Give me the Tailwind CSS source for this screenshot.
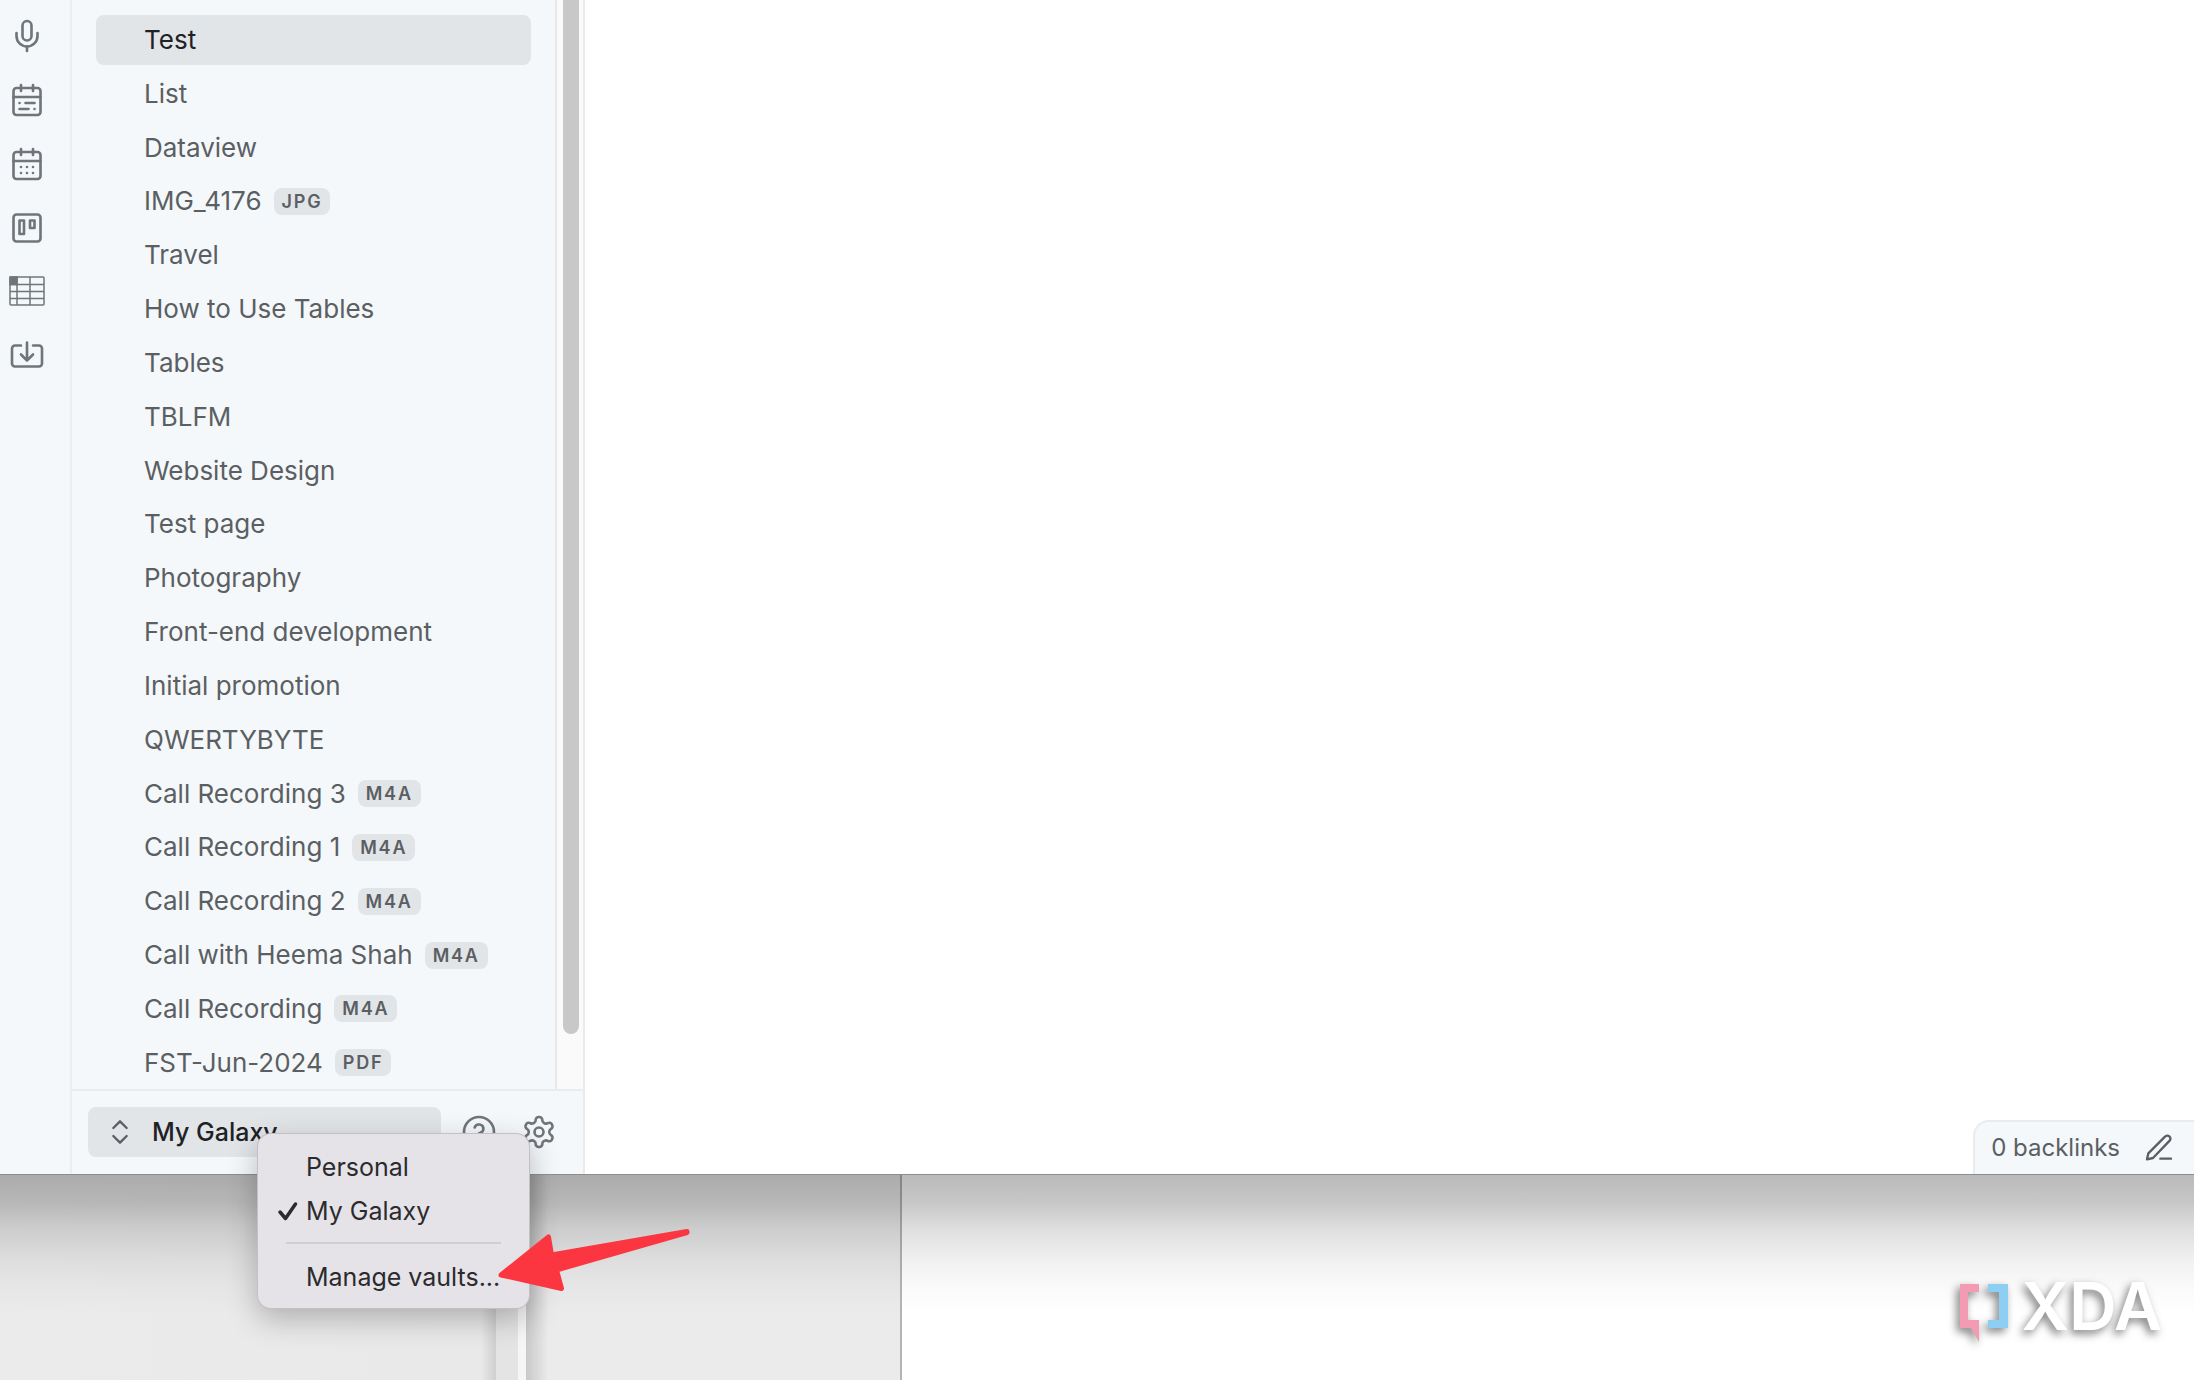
<!DOCTYPE html>
<html lang="en">
<head>
<meta charset="utf-8">
<title>My Galaxy</title>
<script src="https://cdn.jsdelivr.net/npm/@tailwindcss/browser@4"></script>
</head>
<body class="relative flex min-h-screen flex-col overflow-hidden bg-white font-['Inter',sans-serif] text-[25px] leading-8 text-[#5b5f63]">

<!-- Notes window -->
<main class="relative z-10 flex flex-1 border-b border-[#8e8e8e] bg-white">
  <nav aria-label="Ribbon" class="flex w-[72px] flex-col gap-7 border-r-2 border-[#ebeef0] bg-[#f4f8fa] pt-[18px] pl-[9px] text-[#70757a]">
    <button aria-label="Record audio" class="size-9"><svg class="size-9" viewBox="0 0 24 24" fill="none" stroke="currentColor" stroke-width="1.75" stroke-linecap="round" stroke-linejoin="round"><path d="M12 2a3 3 0 0 0-3 3v7a3 3 0 0 0 6 0V5a3 3 0 0 0-3-3Z"/><path d="M19 10v2a7 7 0 0 1-14 0v-2"/><path d="M12 19v3"/></svg></button>
    <button aria-label="Daily note" class="size-9"><svg class="size-9" viewBox="0 0 24 24" fill="none" stroke="currentColor" stroke-width="1.75" stroke-linecap="round" stroke-linejoin="round"><rect x="3" y="4" width="18" height="18" rx="2"/><path d="M16 2v4M8 2v4M3 10h18M17 14h-6M13 18H7M7 14h.01M17 18h.01"/></svg></button>
    <button aria-label="Calendar" class="size-9"><svg class="size-9" viewBox="0 0 24 24" fill="none" stroke="currentColor" stroke-width="1.75" stroke-linecap="round" stroke-linejoin="round"><rect x="3" y="4" width="18" height="18" rx="2"/><path d="M16 2v4M8 2v4M3 10h18M8 14h.01M12 14h.01M16 14h.01M8 18h.01M12 18h.01M16 18h.01"/></svg></button>
    <button aria-label="Kanban board" class="size-9"><svg class="size-9" viewBox="0 0 24 24" fill="none" stroke="currentColor" stroke-width="1.75" stroke-linecap="round" stroke-linejoin="round"><rect x="3" y="3" width="18" height="18" rx="2"/><path d="M7 7h3v9H7zM14 7h3v5h-3z"/></svg></button>
    <button aria-label="Table" class="size-9"><svg class="size-9" viewBox="0 0 36 36" fill="none" stroke="currentColor" stroke-width="1.5"><rect x="1" y="3" width="34" height="28" rx="1"/><path d="M8 3v28M21 3v28M1 10.500h34M1 17.500h34M1 24.500h34"/><path d="M1 3h7v7.500H1z" fill="currentColor"/></svg></button>
    <button aria-label="Import" class="size-9"><svg class="size-9" viewBox="0 0 24 24" fill="none" stroke="currentColor" stroke-width="1.75" stroke-linecap="round" stroke-linejoin="round"><path d="M12 3v12M8 11l4 4 4-4"/><path d="M8 5H4a2 2 0 0 0-2 2v10a2 2 0 0 0 2 2h16a2 2 0 0 0 2-2V7a2 2 0 0 0-2-2h-4"/></svg></button>
  </nav>

  <aside class="flex w-[513px] flex-col border-r-2 border-[#e9ebed] bg-[#f4f8fa]">
    <div class="flex flex-1">
      <ul class="flex flex-1 flex-col justify-between pt-[15px] pr-6 pb-px pl-6 text-[26px]">
        <li><a href="#" class="flex h-[50px] items-center gap-3 rounded-lg bg-[#e2e5e8] pl-12 text-[#1f2225]">Test</a></li>
        <li><a href="#" class="flex h-[50px] items-center gap-3 pl-12">List</a></li>
        <li><a href="#" class="flex h-[50px] items-center gap-3 pl-12">Dataview</a></li>
        <li><a href="#" class="flex h-[50px] items-center gap-3 pl-12">IMG_4176 <span class="rounded-lg bg-[#e2e5e8] px-2 text-[18px] leading-[27px] font-semibold tracking-widest">JPG</span></a></li>
        <li><a href="#" class="flex h-[50px] items-center gap-3 pl-12">Travel</a></li>
        <li><a href="#" class="flex h-[50px] items-center gap-3 pl-12">How to Use Tables</a></li>
        <li><a href="#" class="flex h-[50px] items-center gap-3 pl-12">Tables</a></li>
        <li><a href="#" class="flex h-[50px] items-center gap-3 pl-12">TBLFM</a></li>
        <li><a href="#" class="flex h-[50px] items-center gap-3 pl-12">Website Design</a></li>
        <li><a href="#" class="flex h-[50px] items-center gap-3 pl-12">Test page</a></li>
        <li><a href="#" class="flex h-[50px] items-center gap-3 pl-12">Photography</a></li>
        <li><a href="#" class="flex h-[50px] items-center gap-3 pl-12">Front-end development</a></li>
        <li><a href="#" class="flex h-[50px] items-center gap-3 pl-12">Initial promotion</a></li>
        <li><a href="#" class="flex h-[50px] items-center gap-3 pl-12">QWERTYBYTE</a></li>
        <li><a href="#" class="flex h-[50px] items-center gap-3 pl-12">Call Recording 3 <span class="rounded-lg bg-[#e2e5e8] px-2 text-[18px] leading-[27px] font-semibold tracking-widest">M4A</span></a></li>
        <li><a href="#" class="flex h-[50px] items-center gap-3 pl-12">Call Recording 1 <span class="rounded-lg bg-[#e2e5e8] px-2 text-[18px] leading-[27px] font-semibold tracking-widest">M4A</span></a></li>
        <li><a href="#" class="flex h-[50px] items-center gap-3 pl-12">Call Recording 2 <span class="rounded-lg bg-[#e2e5e8] px-2 text-[18px] leading-[27px] font-semibold tracking-widest">M4A</span></a></li>
        <li><a href="#" class="flex h-[50px] items-center gap-3 pl-12">Call with Heema Shah <span class="rounded-lg bg-[#e2e5e8] px-2 text-[18px] leading-[27px] font-semibold tracking-widest">M4A</span></a></li>
        <li><a href="#" class="flex h-[50px] items-center gap-3 pl-12">Call Recording <span class="rounded-lg bg-[#e2e5e8] px-2 text-[18px] leading-[27px] font-semibold tracking-widest">M4A</span></a></li>
        <li><a href="#" class="flex h-[50px] items-center gap-3 pl-12">FST-Jun-2024 <span class="rounded-lg bg-[#e2e5e8] px-2 text-[18px] leading-[27px] font-semibold tracking-widest">PDF</span></a></li>
      </ul>
      <!-- Scrollbar -->
      <div class="w-7 border-l-2 border-[#e6e8ea] bg-[#fafafa] pb-[55px] pl-[6px]">
        <div class="h-full w-4 rounded-b-full bg-[#c8c8c8]"></div>
      </div>
    </div>

    <div class="relative flex h-[85px] items-start border-t-2 border-[#e9ebed] pt-4 pr-[26px] pl-4 text-[#70757a]">
      <button class="flex h-[50px] flex-1 items-center gap-4 rounded-lg bg-[#e2e5e8] pl-4 font-medium text-[#1f2225]">
        <svg class="size-8 text-[#5b5f63]" viewBox="0 0 24 24" fill="none" stroke="currentColor" stroke-width="1.75" stroke-linecap="round" stroke-linejoin="round"><path d="m7 15 5 5 5-5M7 9l5-5 5 5"/></svg>
        My Galaxy
      </button>
      <button aria-label="Help" class="mt-[7px] ml-5 size-9"><svg class="size-9" viewBox="0 0 24 24" fill="none" stroke="currentColor" stroke-width="1.75" stroke-linecap="round" stroke-linejoin="round"><circle cx="12" cy="12" r="10"/><path d="M9.090 9a3 3 0 0 1 5.830 1c0 2-3 3-3 3M12 17h.01"/></svg></button>
      <button aria-label="Settings" class="mt-[7px] ml-6 size-9"><svg class="size-9" viewBox="0 0 24 24" fill="none" stroke="currentColor" stroke-width="1.75" stroke-linecap="round" stroke-linejoin="round"><path d="M12.220 2h-.44a2 2 0 0 0-2 2v.18a2 2 0 0 1-1 1.730l-.43.25a2 2 0 0 1-2 0l-.15-.08a2 2 0 0 0-2.730.73l-.22.38a2 2 0 0 0 .73 2.730l.15.1a2 2 0 0 1 1 1.720v.51a2 2 0 0 1-1 1.740l-.15.09a2 2 0 0 0-.73 2.730l.22.38a2 2 0 0 0 2.730.73l.15-.08a2 2 0 0 1 2 0l.43.25a2 2 0 0 1 1 1.730V20a2 2 0 0 0 2 2h.44a2 2 0 0 0 2-2v-.18a2 2 0 0 1 1-1.730l.43-.25a2 2 0 0 1 2 0l.15.08a2 2 0 0 0 2.730-.73l.22-.39a2 2 0 0 0-.73-2.730l-.15-.08a2 2 0 0 1-1-1.740v-.5a2 2 0 0 1 1-1.740l.15-.09a2 2 0 0 0 .73-2.730l-.22-.38a2 2 0 0 0-2.730-.73l-.15.08a2 2 0 0 1-2 0l-.43-.25a2 2 0 0 1-1-1.730V4a2 2 0 0 0-2-2z"/><circle cx="12" cy="12" r="3"/></svg></button>

      <!-- Vault menu -->
      <div role="menu" class="absolute top-[42px] left-[185px] flex w-[273px] flex-col rounded-[14px] border border-black/15 bg-[#e5e3e8] pt-[11px] pb-[9px] text-[#2b2b2e] shadow-[0_10px_30px_rgba(0,0,0,0.25)]">
        <button role="menuitem" class="flex h-11 items-center pl-12">Personal</button>
        <button role="menuitem" class="flex h-11 items-center gap-[7px] pl-[19px]">
          <svg class="h-[22px] w-[22px]" viewBox="0 0 22 22" fill="none" stroke="currentColor" stroke-width="3.500" stroke-linecap="round" stroke-linejoin="round"><path d="M3 12l5.500 6.500L18.500 4"/></svg>
          My Galaxy
        </button>
        <hr class="mx-7 mt-[9px] mb-[11px] border-t-2 border-[#d0ced3]">
        <button role="menuitem" class="flex h-11 items-center pl-12">Manage vaults...</button>
      </div>

      <!-- Arrow pointing at the last menu item -->
      <svg class="pointer-events-none absolute top-[135px] left-[418px] h-[74px] w-[206px]" viewBox="490 1226 206 74" fill="#fb3640" stroke="#fb3640" stroke-width="5" stroke-linejoin="round"><path d="M501 1275L548.500 1237L551.500 1255L687 1231.500L687 1232.500L556.500 1270L561.500 1288.500Z"/></svg>
    </div>
  </aside>

  <section aria-label="Editor" class="flex flex-1 items-end justify-end">
    <div class="flex h-[54px] items-center gap-[23px] rounded-tl-2xl border-t-2 border-l-2 border-[#e9ebed] bg-[#f4f8fa] pr-[19px] pl-4">
      <span class="text-2xl">0 backlinks</span>
      <button aria-label="Edit mode" class="size-8"><svg class="size-8" viewBox="0 0 24 24" fill="none" stroke="currentColor" stroke-width="1.75" stroke-linecap="round" stroke-linejoin="round"><path d="M13 20h8M16.500 3.500a2.120 2.120 0 0 1 3.500 3L7.500 19.500l-4.500 1 1-4.500Z"/></svg></button>
    </div>
  </section>
</main>

<!-- Windows behind, darkened by the front window's shadow -->
<div class="relative flex h-[205px]">
  <div class="w-[496px] bg-linear-to-l from-[#cfcfcf] via-[#e9e9e9] via-[3%] to-[#ebebeb]"></div>
  <div class="w-[22px] bg-[#e4e4e4]"></div>
  <div class="w-2 bg-[#f6f6f6]"></div>
  <div class="w-[376px] border-r-2 border-[#b4b4b4] bg-linear-to-r from-[#c9c9c9] via-[#ebebeb] via-[6%] to-[#ebebeb]"></div>
  <div class="flex-1 bg-white"></div>
  <div class="absolute inset-x-0 top-0 h-[140px] bg-[linear-gradient(to_bottom,rgba(0,0,0,0.27)_0%,rgba(0,0,0,0.22)_20%,rgba(0,0,0,0.13)_38%,rgba(0,0,0,0.06)_60%,rgba(0,0,0,0.02)_80%,rgba(0,0,0,0)_100%)]"></div>
  <div class="absolute right-[32px] bottom-[36px] flex h-[62px] items-start gap-3 drop-shadow-[-3px_4px_4px_rgba(0,0,0,0.5)]">
    <svg class="h-[62px] w-[50px]" viewBox="0 0 50 62"><path d="M1 2h19v8H9v28h11v22L12 46H1z" fill="#f29bb2"/><path d="M29 2h20v44H29v-8h11V10H29z" fill="#8dcff2"/></svg>
    <span class="text-[66px] leading-[48px] font-semibold text-white">XDA</span>
  </div>
</div>
</body>
</html>
